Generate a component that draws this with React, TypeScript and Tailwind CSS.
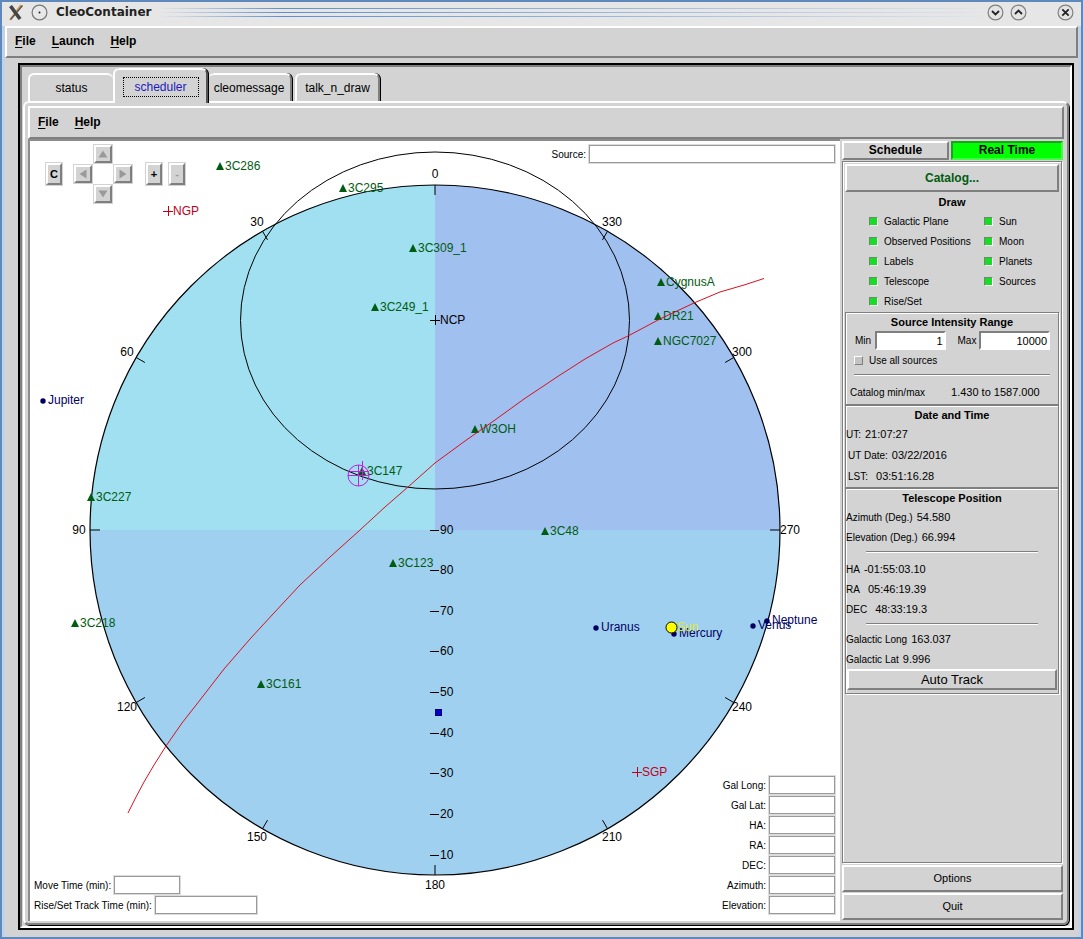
import React from "react";

const raised = "border-2 border-t-white border-l-white border-b-[#7f7f7f] border-r-[#7f7f7f]";
const groove = "border border-[#7f7f7f] shadow-[inset_1px_1px_0_#ffffff,1px_1px_0_#ffffff]";

function MenuBar({ items, className }: { items: string[]; className: string }) {
  return (
    <nav className={`flex items-center gap-4 bg-[#d3d3d3] pb-0.5 text-xs font-bold ${raised} ${className}`}>
      {items.map((item) => (
        <button key={item} type="button" className="leading-4">
          <span className="underline underline-offset-2">{item[0]}</span>
          {item.slice(1)}
        </button>
      ))}
    </nav>
  );
}

function WindowButton({ label, d }: { label: string; d: string }) {
  return (
    <button type="button" aria-label={label}>
      <svg width="17" height="17" viewBox="0 0 17 17" fill="none">
        <circle cx="8.5" cy="8.5" r="7.4" fill="#e4e4e4" stroke="#808080" strokeWidth="1.2" />
        <path d={d} stroke="#222" strokeWidth="1.8" />
      </svg>
    </button>
  );
}

function TitleBar() {
  return (
    <header className="flex h-6 items-center bg-[#e6e6e6] pb-1 pr-[7px] pl-1.5">
      <svg width="17" height="17" viewBox="0 0 17 17" fill="none" aria-hidden="true">
        <path d="M13 1 L2 16" stroke="#d99a4a" strokeWidth="2" />
        <path d="M2.5 2 L12 15" stroke="#444" strokeWidth="3.6" />
        <path d="M14.5 1.5 L9 8 M7 10.5 L2.5 15.5" stroke="#555" strokeWidth="1.4" />
      </svg>
      <svg className="ml-1.5" width="17" height="17" viewBox="0 0 17 17" aria-hidden="true">
        <circle cx="8.5" cy="8.5" r="7.4" fill="#e8e8e8" stroke="#777" strokeWidth="1.2" />
        <circle cx="8.5" cy="8.5" r="1" fill="#222" />
      </svg>
      <h1 className="ml-2 font-['DejaVu_Sans',sans-serif] text-xs font-bold text-[#222]">CleoContainer</h1>
      <div className="mx-2 flex flex-1 flex-col gap-[3px]">
        <div className="h-px bg-linear-to-r from-[#e6e6e6] via-[#5d8fcb] via-15% to-[#e0e4ea]" />
        <div className="h-px bg-linear-to-r from-[#e6e6e6] via-[#5d8fcb] via-15% to-[#e0e4ea]" />
        <div className="h-px bg-linear-to-r from-[#e6e6e6] via-[#5d8fcb] via-15% to-[#e0e4ea]" />
      </div>
      <div className="flex items-center gap-1.5">
        <WindowButton label="Minimize" d="M5 7 L8.5 10.5 L12 7" />
        <WindowButton label="Maximize" d="M5 10 L8.5 6.5 L12 10" />
        <span className="w-[18px]" />
        <WindowButton label="Close" d="M5.3 5.3 L11.7 11.7 M11.7 5.3 L5.3 11.7" />
      </div>
    </header>
  );
}

const CX = 435;
const CY = 530;
const R = 345;

const azimuthLabels: [string, number, number][] = [
  ["0", 435, 178], ["30", 257, 226], ["60", 127, 356], ["90", 79, 534],
  ["120", 127, 711], ["150", 257, 841], ["180", 435, 889], ["210", 612, 841],
  ["240", 742, 711], ["270", 790, 534], ["300", 742, 356], ["330", 612, 226],
];

const elevations: [string, number][] = [
  ["90", 530], ["80", 570], ["70", 611], ["60", 651], ["50", 692],
  ["40", 733], ["30", 773], ["20", 814], ["10", 855],
];

const sources: [string, number, number][] = [
  ["3C286", 220, 166], ["3C295", 343, 188], ["3C309_1", 413, 248], ["3C249_1", 375, 307],
  ["CygnusA", 661, 282], ["DR21", 658, 316], ["NGC7027", 658, 341], ["W3OH", 475, 429],
  ["3C147", 362, 471], ["3C227", 91, 497], ["3C48", 545, 531], ["3C123", 393, 563],
  ["3C218", 75, 623], ["3C161", 261, 684],
];

const planets: [string, number, number, number, number][] = [
  ["Jupiter", 43, 401, 48, 404], ["Uranus", 596, 628, 601, 631], ["Mercury", 674, 634, 679, 637],
  ["Venus", 753, 626, 758, 629], ["Neptune", 767, 621, 772, 624],
];

const poles: [string, number, number, string][] = [
  ["NGP", 168, 211, "#c00018"], ["SGP", 637, 772, "#c00018"], ["NCP", 435, 320, "#000000"],
];

function SkyChart() {
  return (
    <svg
      className="absolute inset-0 h-full w-full text-xs"
      viewBox="30 141 810 780"
      role="img"
      aria-label="Sky chart"
      fill="none"
    >
      <circle cx={CX} cy={CY} r={R} fill="#a0d0f0" />
      <path d={`M${CX} ${CY} H${CX - R} A${R} ${R} 0 0 1 ${CX} ${CY - R} Z`} fill="#a0e0f0" />
      <path d={`M${CX} ${CY} V${CY - R} A${R} ${R} 0 0 1 ${CX + R} ${CY} Z`} fill="#a0c0f0" />
      <circle cx={CX} cy={CY} r={R} stroke="#000" strokeWidth="1.2" />
      <ellipse cx="435" cy="320.5" rx="194.5" ry="168.5" stroke="#000" />
      {azimuthLabels.map(([label, x, y], i) => {
        const a = (i * Math.PI) / 6;
        const sx = -Math.sin(a);
        const sy = -Math.cos(a);
        return (
          <g key={label}>
            <line x1={CX + R * sx} y1={CY + R * sy} x2={CX + (R - 10) * sx} y2={CY + (R - 10) * sy} stroke="#000" />
            <text x={x} y={y} textAnchor="middle" fill="#000">{label}</text>
          </g>
        );
      })}
      {elevations.map(([label, y]) => (
        <g key={label}>
          <path d={`M430 ${y}.5 h9`} stroke="#000" />
          <text x="440" y={y + 4} fill="#000">{label}</text>
        </g>
      ))}
      {sources.map(([label, x, y]) => (
        <g key={label} fill="#005c10">
          <path d={`M${x - 4} ${y + 4} L${x} ${y - 4} L${x + 4} ${y + 4} Z`} />
          <text x={x + 5} y={y + 4}>{label}</text>
        </g>
      ))}
      {poles.map(([label, x, y, color]) => (
        <g key={label}>
          <path d={`M${x - 5} ${y}.5 h10 M${x}.5 ${y - 5} v10`} stroke={color} />
          <text x={x + 5} y={y + 4} fill={color}>{label}</text>
        </g>
      ))}
      {planets.map(([label, x, y, tx, ty]) => (
        <g key={label} fill="#000060">
          <circle cx={x} cy={y} r="2.7" />
          <text x={tx} y={ty}>{label}</text>
        </g>
      ))}
      <circle cx="671.5" cy="627.5" r="5.5" fill="#ffff00" stroke="#000" />
      <text x="677" y="631" fill="#e0e838">Sun</text>
      <path
        d="M764 278.5 L744 285 L720 292 L695 302.5 L660 319 L628 336 L613 343 L585 359 L560 375 L524 399 L495 420 L465 441 L435 463 L408 487 L385 507 L360 530 L330 557 L300 585 L273 614 L250 639 L224 669 L200 700 L182 723 L166 746 L154 765 L144 782 L136 797 L128 813"
        stroke="#d8101c"
      />
      <g stroke="#c020d8">
        <circle cx="358.5" cy="475.5" r="10.5" />
        <path d="M358.5 465 v21 M348 475.5 h21 M362.5 461 v19 M350 471.5 h19" />
      </g>
      <rect x="435.5" y="709.5" width="6" height="6" fill="#0000d0" stroke="#000060" />
    </svg>
  );
}

function PadButton({ label, d, className }: { label: string; d: string; className: string }) {
  return (
    <button type="button" aria-label={label} className={`flex size-5 items-center justify-center border border-[#d3d3d3] bg-white ${className}`}>
      <span className={`flex size-[18px] items-center justify-center bg-[#d3d3d3] ${raised}`}>
        <svg width="10" height="10" viewBox="0 0 10 10">
          <path d={d} fill="#9a9a9a" />
        </svg>
      </span>
    </button>
  );
}

function KeyButton({ label, className = "" }: { label: string; className?: string }) {
  return (
    <button type="button" className="flex h-6 w-[18px] border border-[#d3d3d3] text-[11px] font-bold">
      <span className={`flex flex-1 items-center justify-center self-stretch bg-[#d3d3d3] ${raised} ${className}`}>{label}</span>
    </button>
  );
}

function Field({ label, width }: { label: string; width: string }) {
  return (
    <label className="flex h-5 items-center gap-[3px]">
      <span className="whitespace-nowrap text-[10px]">{label}</span>
      <input type="text" className={`h-[18px] border border-[#999] bg-white px-1 text-[11px] outline outline-[#dcdcdc] ${width}`} />
    </label>
  );
}

function ChartArea() {
  return (
    <section className="relative flex min-w-0 flex-1 flex-col justify-between border-t-2 border-l-2 border-[#8c8c8c] bg-white">
      <SkyChart />
      <div className="relative flex items-start justify-between pt-[3px] pr-[5px] pl-[15px]">
        <div className="flex items-center">
          <KeyButton label="C" />
          <div className="ml-2.5 grid grid-cols-3">
            <PadButton label="Up" d="M5 1.5 L9.5 8.5 H0.5 Z" className="col-start-2 row-start-1" />
            <PadButton label="Left" d="M1.5 5 L8.5 0.5 V9.5 Z" className="col-start-1 row-start-2" />
            <PadButton label="Right" d="M8.5 5 L1.5 0.5 V9.5 Z" className="col-start-3 row-start-2" />
            <PadButton label="Down" d="M5 8.5 L9.5 1.5 H0.5 Z" className="col-start-2 row-start-3" />
          </div>
          <div className="ml-3 flex gap-[5px]">
            <KeyButton label="+" />
            <KeyButton label="-" className="text-[#9a9a9a]" />
          </div>
        </div>
        <Field label="Source:" width="w-[246px]" />
      </div>
      <div className="relative flex items-end justify-between pr-[5px] pb-1.5 pl-1">
        <div>
          <Field label="Move Time (min):" width="w-[66px]" />
          <Field label="Rise/Set Track Time (min):" width="w-[102px]" />
        </div>
        <div className="flex flex-col items-end">
          {["Gal Long:", "Gal Lat:", "HA:", "RA:", "DEC:", "Azimuth:", "Elevation:"].map((label) => (
            <Field key={label} label={label} width="w-[66px]" />
          ))}
        </div>
      </div>
    </section>
  );
}

function Check({ label, checked = true }: { label: string; checked?: boolean }) {
  return (
    <label className="flex h-5 items-center gap-1.5 whitespace-nowrap text-[10px]">
      <input
        type="checkbox"
        defaultChecked={checked}
        className="size-[9px] appearance-none border border-t-white border-l-white border-b-[#7f7f7f] border-r-[#7f7f7f] bg-[#c3c3c3] checked:border-t-[#6a8a6a] checked:border-l-[#6a8a6a] checked:border-b-white checked:border-r-white checked:bg-[#18dc28]"
      />
      {label}
    </label>
  );
}

function Heading({ children }: { children: string }) {
  return <h2 className="text-center text-[11px] leading-[18px] font-bold">{children}</h2>;
}

function Reading({ name, value, gap = "gap-1", height = "h-5" }: { name: string; value: string; gap?: string; height?: string }) {
  return (
    <div className={`flex items-center text-[11px] ${gap} ${height}`}>
      <span className="text-[10px]">{name}</span>
      <span>{value}</span>
    </div>
  );
}

function Separator({ className }: { className: string }) {
  return <hr className={`border-t border-b border-t-[#7f7f7f] border-b-white ${className}`} />;
}

const numberInput =
  "h-[19px] min-w-0 border-2 border-t-[#7f7f7f] border-l-[#7f7f7f] border-b-white border-r-white bg-white px-px text-right text-[11px]";

function Sidebar() {
  return (
    <aside className="flex w-[224px] shrink-0 flex-col bg-[#d3d3d3] pr-px pl-0.5">
      <div className="flex gap-0.5 pt-0.5 text-xs font-bold">
        <button type="button" className={`h-[19px] w-[107px] leading-[15px] ${raised}`}>Schedule</button>
        <button type="button" className="h-[19px] flex-1 border-2 border-t-[#20a020] border-l-[#20a020] border-b-[#40ff40] border-r-[#40ff40] bg-[#00ff00] leading-[15px]">
          Real Time
        </button>
      </div>
      <div className={`mt-px mr-px flex flex-1 flex-col p-0.5 ${groove}`}>
        <button type="button" className={`h-7 text-xs font-bold text-[#005c10] ${raised}`}>Catalog...</button>
        <div className="pt-px pb-px">
          <Heading>Draw</Heading>
          <div className="grid grid-cols-[115px_1fr] pl-6">
            <Check label="Galactic Plane" />
            <Check label="Sun" />
            <Check label="Observed Positions" />
            <Check label="Moon" />
            <Check label="Labels" />
            <Check label="Planets" />
            <Check label="Telescope" />
            <Check label="Sources" />
            <Check label="Rise/Set" />
          </div>
        </div>
        <section className={`h-[93px] ${groove}`}>
          <Heading>Source Intensity Range</Heading>
          <div className="flex items-center pr-2 pl-[9px] text-[10px]">
            <label htmlFor="min-intensity" className="w-5">Min</label>
            <input id="min-intensity" className={`w-[71px] ${numberInput}`} defaultValue="1" />
            <label htmlFor="max-intensity" className="ml-3 w-[22px]">Max</label>
            <input id="max-intensity" className={`w-[71px] ${numberInput}`} defaultValue="10000" />
          </div>
          <div className="pl-2">
            <Check label="Use all sources" checked={false} />
          </div>
          <Separator className="mx-2 mt-1 mb-1.5" />
          <div className="flex h-5 items-center gap-[26px] pl-1 text-[10px]">
            <span>Catalog min/max</span>
            <span className="text-[11px]">1.430 to 1587.000</span>
          </div>
        </section>
        <section className={`h-[83px] ${groove}`}>
          <Heading>Date and Time</Heading>
          <Reading name="UT:" value="21:07:27" height="h-[21px]" />
          <div className="pl-0.5">
            <Reading name="UT Date:" value="03/22/2016" height="h-[21px]" />
            <Reading name="LST:" value="03:51:16.28" gap="gap-2" height="h-[21px]" />
          </div>
        </section>
        <section className={`flex h-[206px] flex-col ${groove}`}>
          <Heading>Telescope Position</Heading>
          <Reading name="Azimuth (Deg.)" value="54.580" />
          <Reading name="Elevation (Deg.)" value="66.994" />
          <Separator className="mx-5 mt-1 mb-1.5" />
          <Reading name="HA" value="-01:55:03.10" />
          <Reading name="RA" value="05:46:19.39" gap="gap-2" />
          <Reading name="DEC" value="48:33:19.3" gap="gap-2" />
          <Separator className="mx-5 my-1" />
          <Reading name="Galactic Long" value="163.037" />
          <Reading name="Galactic Lat" value="9.996" />
          <button type="button" className={`mx-px h-[21px] text-[13px] leading-4 ${raised}`}>Auto Track</button>
        </section>
      </div>
      <button type="button" className={`mt-0.5 h-[27px] text-[11px] ${raised}`}>Options</button>
      <button type="button" className={`mt-px mb-px h-[27px] text-[11px] ${raised}`}>Quit</button>
    </aside>
  );
}

function Tabs() {
  const tab =
    "h-7 rounded-t-md border-t-2 border-l-2 border-r-2 border-t-white border-l-white border-r-[#7f7f7f] bg-[#d3d3d3] text-center";
  return (
    <div role="tablist" className="flex items-end pl-[5px] text-xs leading-[22px]">
      <button type="button" role="tab" className={`w-[85px] border-r-0! ${tab}`}>status</button>
      <button
        type="button"
        role="tab"
        aria-selected="true"
        className="relative -mb-0.5 flex h-[35px] w-[95px] items-center justify-center rounded-t-md border-t-2 border-r-2 border-l-2 border-t-white border-r-[#555] border-l-white bg-[#d3d3d3] text-[#1c1cc0] shadow-[1px_0_0_#000]"
      >
        <span className="w-[76px] border border-dotted border-black leading-[18px]">scheduler</span>
      </button>
      <button type="button" role="tab" className={`w-[84px] border-l-0! shadow-[1px_0_0_#000] ${tab}`}>cleomessage</button>
      <button type="button" role="tab" className={`ml-[3px] w-[85px] shadow-[1px_0_0_#000] ${tab}`}>talk_n_draw</button>
    </div>
  );
}

export default function App() {
  return (
    <div className="flex min-h-screen flex-col border-2 border-[#5f88bc] bg-[#d3d3d3] font-['Liberation_Sans',Arial,sans-serif] text-black">
      <TitleBar />
      <div className="flex flex-1 flex-col border-x-3 border-[#c3d3e6]">
        <MenuBar items={["File", "Launch", "Help"]} className="h-8 px-2" />
        <main className="mt-[5px] mr-1 mb-[7px] ml-[13px] flex flex-1 flex-col border-2 border-black">
          <div className="flex flex-1 flex-col border-2 border-t-[#7f7f7f] border-r-white border-b-white border-l-[#7f7f7f] px-px">
            <div className="pt-px">
              <Tabs />
            </div>
            <div className="mb-px flex flex-1 flex-col rounded-md border-2 border-t-white border-r-[#7f7f7f] border-b-[#7f7f7f] border-l-white px-[3px] pt-[3px] shadow-[1px_1px_0_#000]">
              <MenuBar items={["File", "Help"]} className="h-[33px] px-2" />
              <div className="flex flex-1 pb-0.5">
                <ChartArea />
                <Sidebar />
              </div>
            </div>
          </div>
        </main>
      </div>
    </div>
  );
}
